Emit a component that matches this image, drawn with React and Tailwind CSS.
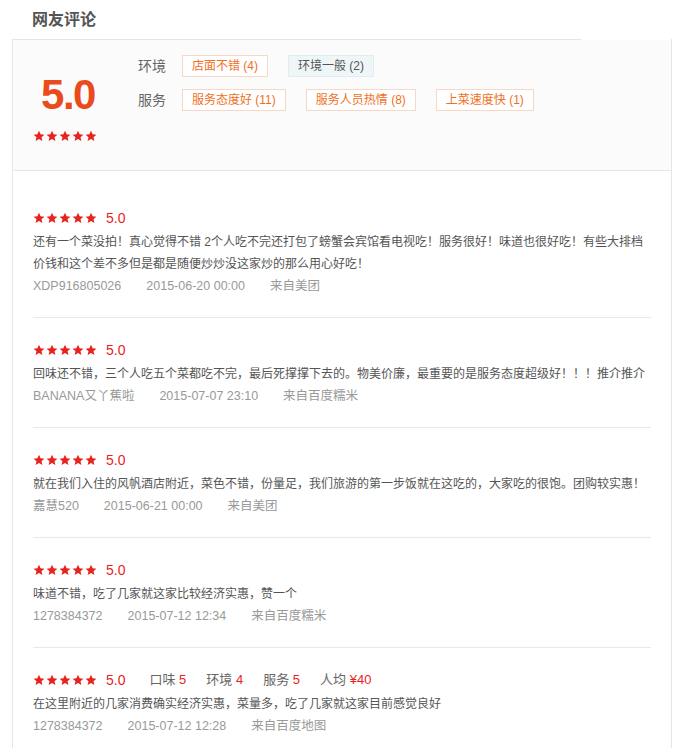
import React from "react";

const font = "font-['Liberation_Sans','Noto_Sans_CJK_SC',sans-serif]";

function Stars({ size = 12 }) {
  return (
    <div className="flex gap-px">
      {[0, 1, 2, 3, 4].map((i) => (
        <svg key={i} width={size} height={size} viewBox="0 0 24 24">
          <path
            d="M12 1.5l3.2 7.1 7.6.7-5.8 5.1 1.8 7.6L12 18l-6.8 4 1.8-7.6-5.8-5.1 7.6-.7z"
            fill="#e8231e"
          />
        </svg>
      ))}
    </div>
  );
}

const reviews = [
  {
    text: "还有一个菜没拍！真心觉得不错 2个人吃不完还打包了螃蟹会宾馆看电视吃！服务很好！味道也很好吃！有些大排档价钱和这个差不多但是都是随便炒炒没这家炒的那么用心好吃！",
    user: "XDP916805026",
    time: "2015-06-20 00:00",
    from: "来自美团",
  },
  {
    text: "回味还不错，三个人吃五个菜都吃不完，最后死撑撑下去的。物美价廉，最重要的是服务态度超级好！！！推介推介",
    user: "BANANA又丫蕉啦",
    time: "2015-07-07 23:10",
    from: "来自百度糯米",
  },
  {
    text: "就在我们入住的风帆酒店附近，菜色不错，份量足，我们旅游的第一步饭就在这吃的，大家吃的很饱。团购较实惠！",
    user: "嘉慧520",
    time: "2015-06-21 00:00",
    from: "来自美团",
  },
  {
    text: "味道不错，吃了几家就这家比较经济实惠，赞一个",
    user: "1278384372",
    time: "2015-07-12 12:34",
    from: "来自百度糯米",
  },
  {
    text: "在这里附近的几家消费确实经济实惠，菜量多，吃了几家就这家目前感觉良好",
    user: "1278384372",
    time: "2015-07-12 12:28",
    from: "来自百度地图",
    scores: [
      ["口味", "5"],
      ["环境", "4"],
      ["服务", "5"],
      ["人均", "¥40"],
    ],
  },
];

function Tag({ children, blue }) {
  return (
    <span
      className={
        blue
          ? "h-[22px] px-[9px] flex items-center text-[12px] text-[#555] bg-[#eef6f8] border border-[#dceef2]"
          : "h-[22px] px-[9px] flex items-center text-[12px] text-[#f0701e] bg-white border border-[#f6d8c4]"
      }
    >
      {children}
    </span>
  );
}

export default function App() {
  return (
    <div className={`w-[688px] min-h-[748px] bg-white ${font}`}>
      <div className="h-[39px] pl-[32px] flex items-center">
        <h2 className="text-[16px] font-bold text-[#555] leading-none">网友评论</h2>
      </div>

      <div className="ml-[12px] w-[660px] border-l border-r border-[#e6e6e6] pb-[10px]">
        <div className="h-px w-[568px] bg-[#e6e6e6]" />
        <div className="h-[131px] bg-[#fbfbfb] border-b border-[#e6e6e6] flex pl-[20px]">
          <div className="w-[64px] flex flex-col items-center pt-[34px]">
            <div className="ml-[6px] text-[42px] leading-[42px] font-bold tracking-[-1.5px] text-[#ea4b1c]">
              5.0
            </div>
            <div className="mt-[14px]">
              <Stars />
            </div>
          </div>
          <div className="ml-[41px] pt-[15px] flex flex-col gap-[12px]">
            <div className="flex items-center">
              <span className="text-[14px] text-[#666] w-[44px]">环境</span>
              <div className="flex gap-[20px]">
                <Tag>店面不错 (4)</Tag>
                <Tag blue>环境一般 (2)</Tag>
              </div>
            </div>
            <div className="flex items-center">
              <span className="text-[14px] text-[#666] w-[44px]">服务</span>
              <div className="flex gap-[20px]">
                <Tag>服务态度好 (11)</Tag>
                <Tag>服务人员热情 (8)</Tag>
                <Tag>上菜速度快 (1)</Tag>
              </div>
            </div>
          </div>
        </div>

        <div className="mt-[15px] px-[20px]">
          {reviews.map((r, i) => (
            <div
              key={i}
              className={`pt-[19px] pb-[20px] ${i < reviews.length - 1 ? "border-b border-[#e8e8e8]" : ""}`}
            >
              <div className="h-[26px] flex items-center">
                <Stars />
                <span className="ml-[9px] text-[14px] text-[#e8231e]">5.0</span>
                {r.scores && (
                  <div className="ml-[24px] flex gap-[20px] text-[13px]">
                    {r.scores.map(([k, v]) => (
                      <span key={k} className="text-[#666]">
                        {k} <span className="text-[#e8231e]">{v}</span>
                      </span>
                    ))}
                  </div>
                )}
              </div>
              <p className="text-[12px] leading-[22px] text-[#555]">{r.text}</p>
              <div className="h-[22px] flex items-center gap-[25px] text-[12.5px] text-[#999]">
                <span>{r.user}</span>
                <span>{r.time}</span>
                <span>{r.from}</span>
              </div>
            </div>
          ))}
        </div>
      </div>
    </div>
  );
}
